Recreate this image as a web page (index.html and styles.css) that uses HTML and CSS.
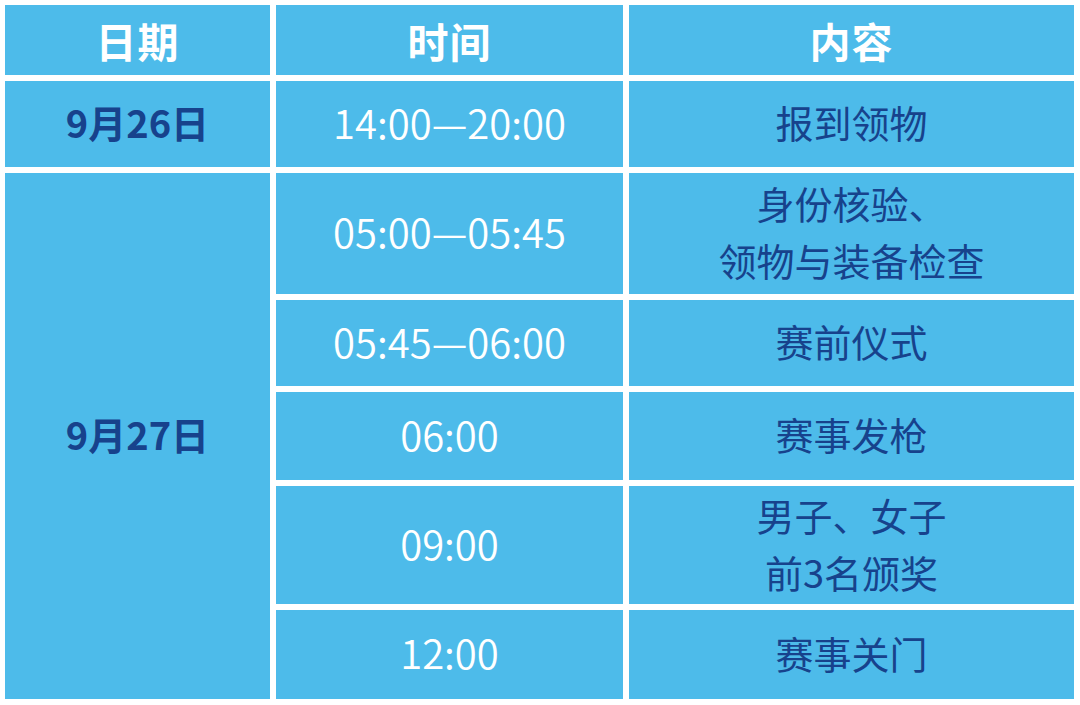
FILE: index.html
```html
<!DOCTYPE html>
<html lang="zh-CN">
<head>
<meta charset="utf-8">
<title>赛程安排</title>
<link rel="stylesheet" href="styles.css">
</head>
<body>
<div class="schedule">
  <div class="cell head">日期</div>
  <div class="cell head">时间</div>
  <div class="cell head">内容</div>

  <div class="cell date">9月26日</div>
  <div class="cell time">14:00—20:00</div>
  <div class="cell item">报到领物</div>

  <div class="cell date span5">9月27日</div>
  <div class="cell time">05:00—05:45</div>
  <div class="cell item">身份核验、<br>领物与装备检查</div>

  <div class="cell time">05:45—06:00</div>
  <div class="cell item">赛前仪式</div>

  <div class="cell time">06:00</div>
  <div class="cell item">赛事发枪</div>

  <div class="cell time">09:00</div>
  <div class="cell item">男子、女子<br>前3名颁奖</div>

  <div class="cell time">12:00</div>
  <div class="cell item">赛事关门</div>
</div>
</body>
</html>
```
FILE: styles.css
```css
html, body {
  margin: 0;
  padding: 0;
  background: #ffffff;
}

body {
  width: 1080px;
  height: 705px;
  overflow: hidden;
  font-family: "Noto Sans CJK SC", "Noto Sans", sans-serif;
}

.schedule {
  display: grid;
  grid-template-columns: 265px 347px 445px;
  grid-template-rows: 70px 86px 121px 86px 88px 118px 89px;
  gap: 6px;
  padding: 5px 6px 6px 5px;
}

.cell {
  background: #4dbbea;
  display: flex;
  align-items: center;
  justify-content: center;
  text-align: center;
  padding-bottom: 5px;
  box-sizing: border-box;
}

.head {
  color: #ffffff;
  font-weight: 700;
  font-size: 41px;
  letter-spacing: 1px;
  padding-bottom: 0;
}

.date {
  color: #17428c;
  font-weight: 700;
  font-size: 38px;
}

.span5 {
  grid-row: span 5;
}

.time {
  color: #ffffff;
  font-weight: 350;
  font-size: 40px;
}

.item {
  color: #17428c;
  font-weight: 400;
  font-size: 38px;
  line-height: 57px;
}
```
